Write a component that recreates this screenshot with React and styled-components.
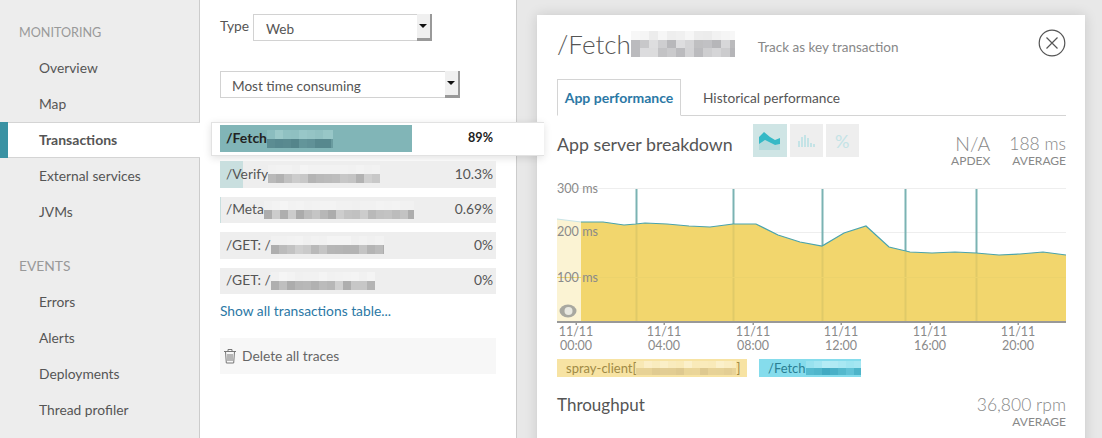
import React from 'react';
import styled, { createGlobalStyle } from 'styled-components';

const Global = createGlobalStyle`
  html, body { margin: 0; padding: 0; background: #e8e8e8; }
  body { font-family: Lato, "Liberation Sans", sans-serif; color: #555; }
`;

const Page = styled.div`
  display: flex;
  width: 1102px;
  height: 438px;
  overflow: hidden;
`;

const Sidebar = styled.nav`
  width: 199px;
  flex: none;
  background: #ededed;
  border-right: 1px solid #ccc;
  padding-top: 14px;
`;

const SectionLabel = styled.div`
  height: 36px;
  line-height: ${p => p.$line}px;
  padding-left: 19px;
  font-size: ${p => p.$size}px;
  color: #999;
  margin-top: ${p => p.$gap || 0}px;
`;

const NavItem = styled.div`
  position: relative;
  height: 36px;
  line-height: 36px;
  padding-left: 39px;
  font-size: 13.8px;
  color: #555;
  ${p => p.$active && `
    background: #fff;
    font-size: 14px;
    font-weight: 700;
    margin-right: -1px;
    box-shadow: inset 8px 0 0 #3a92a3, inset 0 1px 0 #d4d4d4, inset 0 -1px 0 #d4d4d4;
  `}
`;

const Middle = styled.section`
  width: 276px;
  flex: none;
  background: #fff;
  border-right: 1px solid #ccc;
  padding: 14px 20px 0 20px;
  position: relative;
  z-index: 2;
`;

const TypeRow = styled.div`
  display: flex;
  align-items: flex-start;
  justify-content: space-between;
  width: 212px;
  font-size: 13.8px;
  line-height: 24px;
`;

const SelectBox = styled.div`
  position: relative;
  box-sizing: border-box;
  width: ${p => p.$w}px;
  height: 27px;
  line-height: 28px;
  padding-left: ${p => p.$pad}px;
  border: 1px solid #d2d2d2;
  font-size: 13.6px;
  color: #555;
  background: #fff;
  margin-top: ${p => p.$top || 0}px;
`;

const SelectArrow = styled.span`
  position: absolute;
  right: -1px;
  top: -1px;
  width: 15px;
  height: 27px;
  box-sizing: border-box;
  background: #f0f0f0;
  border-right: 2px solid #999;
  border-bottom: 3px solid #999;
  &::after {
    content: '';
    position: absolute;
    left: 2px;
    top: 10px;
    border: 4px solid transparent;
    border-top: 4px solid #111;
  }
`;

const Rows = styled.div`
  margin-top: 24px;
  display: flex;
  flex-direction: column;
`;

const Row = styled.div`
  position: relative;
  display: flex;
  align-items: center;
  height: 26.5px;
  margin-bottom: 9px;
  background: #eee;
  font-size: 13.8px;
  color: #555;
`;

const ActiveRow = styled.div`
  position: relative;
  height: 34px;
  margin: 0 -48px 5px -9px;
  padding: 2px 0 0 8px;
  box-sizing: border-box;
  background: #fff;
  border: 1px solid #e2e2e2;
  border-right: 0;
  box-shadow: 0 2px 8px rgba(0,0,0,.12);
  display: flex;
`;

const ActiveInner = styled.div`
  position: relative;
  display: flex;
  align-items: center;
  width: 276px;
  height: 27px;
  font-size: 14px;
  font-weight: 700;
  color: #222;
`;

const Fill = styled.span`
  position: absolute;
  left: 0;
  top: 0;
  bottom: 0;
  background: ${p => p.$color};
`;

const RowName = styled.span`
  position: relative;
  padding-left: 6px;
  display: flex;
  align-items: center;
  white-space: nowrap;
  flex: 1;
`;

const RowText = styled.span`
  padding-bottom: 2px;
`;

const Percent = styled.span`
  position: relative;
  padding: 0 3px 2px 0;
  font-size: ${p => p.$size || 13.8}px;
`;

const MosaicSvg = styled.svg`
  display: block;
  flex: none;
  shape-rendering: crispEdges;
`;

const ShowAll = styled.a`
  display: block;
  margin-top: -2px;
  font-size: 13.8px;
  line-height: 20px;
  color: #2b78a5;
`;

const DeleteBar = styled.div`
  margin-top: 17px;
  height: 36px;
  display: flex;
  align-items: center;
  gap: 5px;
  padding: 0 0 1px 3px;
  box-sizing: border-box;
  background: #f7f7f7;
  font-size: 13.8px;
  color: #666;
`;

const Stage = styled.main`
  flex: 1;
  padding: 15px 17px 0 20px;
  background: #e8e8e8;
  min-width: 0;
`;

const Card = styled.article`
  height: 440px;
  background: #fff;
  box-sizing: border-box;
  padding: 12px 19px 0 20px;
  box-shadow: 0 0 12px rgba(0,0,0,.14);
`;

const TitleRow = styled.div`
  display: flex;
  align-items: center;
  height: 34px;
`;

const CloseSlot = styled.div`
  display: flex;
  margin-top: -3px;
`;

const Title = styled.h1`
  margin: 0;
  font-size: 26px;
  font-weight: 300;
  color: #555;
  display: flex;
  align-items: center;
`;

const TrackLink = styled.span`
  margin-left: 23px;
  margin-top: 6px;
  font-size: 13.5px;
  color: #888;
  flex: 1;
`;

const Tabs = styled.div`
  display: flex;
  height: 37px;
  margin-top: 18px;
  box-shadow: inset 0 -1px 0 #d4d4d4;
`;

const Tab = styled.div`
  box-sizing: border-box;
  height: 37px;
  line-height: 37px;
  ${p => p.$active ? `
    width: 124px;
    line-height: 35px;
    text-align: center;
    border: 1px solid #d4d4d4;
    border-bottom: 1px solid #fff;
    color: #2b78a5;
    font-weight: 700;
    font-size: 14px;
  ` : `
    margin-left: 22px;
    color: #555;
    font-size: 13.7px;
  `}
`;

const HeaderRow = styled.div`
  display: flex;
  align-items: flex-start;
  margin-top: 8px;
  height: 64px;
`;

const Heading = styled.h2`
  margin: 8px 20px 0 0;
  font-size: 17.8px;
  line-height: 24px;
  font-weight: 400;
  color: #555;
  white-space: nowrap;
`;

const ChartButtons = styled.div`
  display: flex;
  gap: 3px;
`;

const ChartButton = styled.div`
  width: ${p => p.$w || 33}px;
  height: 33px;
  background: ${p => (p.$on ? '#cfe5e5' : '#eee')};
  display: flex;
  align-items: center;
  justify-content: center;
  color: #c4e3e6;
  font-size: 18px;
  font-weight: 400;
`;

const Stats = styled.div`
  margin-left: auto;
  display: flex;
  gap: 19px;
`;

const Stat = styled.div`
  text-align: right;
  color: #888;
`;

const StatValue = styled.div`
  font-size: ${p => p.$size || 17.5}px;
  line-height: 24px;
  font-weight: 300;
  margin-top: ${p => p.$top ?? 8}px;
`;

const StatLabel = styled.div`
  font-size: 12px;
  line-height: 14px;
  margin-top: -2px;
`;

const ChartSvg = styled.svg`
  display: block;
  width: 509px;
  height: 180px;
  margin-top: -12px;
  font-family: Lato, "Liberation Sans", sans-serif;
`;

const Legend = styled.div`
  display: flex;
  gap: 12px;
  margin-top: 3px;
`;

const LegendChip = styled.div`
  height: 18px;
  box-sizing: border-box;
  width: ${p => p.$w}px;
  display: flex;
  align-items: center;
  padding-left: 9px;
  font-size: 13px;
  background: ${p => p.$bg};
  color: ${p => p.$fg};
  white-space: nowrap;
`;

const FooterRow = styled.div`
  display: flex;
  justify-content: space-between;
  align-items: flex-start;
  margin-top: 16px;
`;

const FooterTitle = styled.div`
  font-size: 17px;
  line-height: 24px;
  color: #555;
`;

function rng(seed) {
  let s = seed;
  return () => {
    s = (s * 16807) % 2147483647;
    return s / 2147483647;
  };
}

function Mosaic({ w, h, seed, color = '#aaa', topColor = '#f4f4f4', cell = 8, rows = 2 }) {
  const r = rng(seed);
  const cols = Math.ceil(w / cell);
  const rects = [];
  for (let y = 0; y < rows; y++) {
    for (let x = 0; x < cols; x++) {
      const v = r();
      const top = y === 0;
      rects.push(
        <rect key={`${x}-${y}`} x={x * cell} y={(y * h) / rows} width={cell} height={h / rows}
          fill={top ? topColor : color} fillOpacity={top ? 0.4 + v * 0.6 : 0.45 + v * 0.55} />
      );
    }
  }
  return <MosaicSvg width={w} height={h} viewBox={`0 0 ${w} ${h}`}>{rects}</MosaicSvg>;
}

const areaPts = [[557,219],[581,222],[603,222],[624,225],[636,224],[645,223],[667,224],[689,226],[710,227],[733,224],[756,224],[778,235],[800,242],[822,246],[844,233],[866,226],[889,247],[910,252],[932,253],[955,252],[976,253],[999,255],[1020,254],[1043,252],[1066,255]];

function Chart() {
  const ox = 557, oy = 176;
  const pts = areaPts.map(([x, y]) => `${x - ox},${y - oy}`).join(' ');
  const base = 321 - oy;
  const marks = [[636, 224], [733, 224], [822, 246], [905, 251], [976, 253]];
  const ticks = [[576, '00:00'], [664, '04:00'], [753, '08:00'], [841, '12:00'], [930, '16:00'], [1018, '20:00']];
  return (
    <ChartSvg viewBox="0 0 509 180">
      {[188, 232, 277].map(y => <line key={y} x1="0" x2="509" y1={y - oy + .5} y2={y - oy + .5} stroke="#eee" />)}
      {marks.map(([x]) => <line key={x} x1={x - ox + .5} x2={x - ox + .5} y1={189 - oy} y2={base} stroke="#7ab3b3" strokeWidth="2" />)}
      <polygon points={`0,${base} ${pts} 509,${base}`} fill="#f2d66d" />
      <polyline points={pts} fill="none" stroke="#4aa3ad" strokeWidth="1.2" />
      <rect x="0" y={218 - oy} width="24" height={base - (218 - oy)} fill="#fff" fillOpacity=".7" />
      {marks.map(([x, y]) => <line key={`m${x}`} x1={x - ox + .5} x2={x - ox + .5} y1={y - oy + 1} y2={base} stroke="#e0ca68" strokeWidth="2" />)}
      <line x1="0" x2="509" y1={277 - oy + .5} y2={277 - oy + .5} stroke="#ecd36c" />
      {[['300 ms', 192], ['200 ms', 235], ['100 ms', 281]].map(([t, y]) => (
        <text key={t} x="0" y={y - oy + 1} fontSize="12.6" fill="#8a8a8a">{t}</text>
      ))}
      <ellipse cx="11" cy={311 - oy} rx="8.5" ry="6.5" fill="#a8a8a0" />
      <circle cx="11.5" cy={311 - oy} r="4" fill="#e8e8e0" />
      <rect x="0" y={321 - oy} width="509" height="2" fill="#999" />
      {ticks.map(([x, t]) => (
        <g key={t} fill="#8a8a8a" fontSize="12.5" textAnchor="middle">
          <rect x={x - ox - .5} y={323 - oy} width="1.5" height="2" fill="#999" />
          <text x={x - ox} y={336 - oy}>11/11</text>
          <text x={x - ox} y={350 - oy}>{t}</text>
        </g>
      ))}
    </ChartSvg>
  );
}

const TrashIcon = () => (
  <svg width="14" height="16" viewBox="0 0 14 16" fill="none" stroke="#777" strokeWidth="1">
    <path d="M1 3.5h12M5 3.5V1.5h4v2M2.5 3.5l.8 11.5h7.4l.8-11.5M5 6v7M7 6v7M9 6v7" />
  </svg>
);

const CloseIcon = () => (
  <svg width="28" height="28" viewBox="0 0 28 28" fill="none" stroke="#555" strokeWidth="1.2">
    <circle cx="14" cy="14" r="12.8" />
    <path d="M8.5 8.5l11 11M19.5 8.5l-11 11" />
  </svg>
);

const AreaIcon = () => (
  <svg width="21" height="18" viewBox="0 0 21 18">
    <path d="M0 12l6-4 4 2 6 3 5-1v6H0z" fill="#b4dadc" />
    <path d="M0 5l5-5 6 5 5 3 5-2v6l-5 1-6-3-4-2-6 4z" fill="#35b9c6" />
  </svg>
);

const BarsIcon = () => (
  <svg width="17" height="12" viewBox="0 0 17 12" fill="#c4e3e6">
    <rect x="0" y="6" width="2" height="6" />
    <rect x="3" y="2" width="2" height="10" />
    <rect x="6" y="0" width="2" height="12" />
    <rect x="9" y="3" width="2" height="9" />
    <rect x="12" y="8" width="2" height="4" />
    <rect x="15" y="9" width="2" height="3" />
  </svg>
);

const sections = {
  monitoring: ['Overview', 'Map', 'Transactions', 'External services', 'JVMs'],
  events: ['Errors', 'Alerts', 'Deployments', 'Thread profiler'],
};

const rows = [
  { name: '/Verify', pct: '10.3%', fill: 23, mw: 112, seed: 11 },
  { name: '/Meta', pct: '0.69%', fill: 1, mw: 150, seed: 29 },
  { name: '/GET: /', pct: '0%', fill: 0, mw: 113, seed: 47 },
  { name: '/GET: /', pct: '0%', fill: 0, mw: 104, seed: 83 },
];

export default function App() {
  return (
    <Page>
      <Global />
      <Sidebar>
        <SectionLabel $size={12.6} $line={38}>MONITORING</SectionLabel>
        {sections.monitoring.map(n => <NavItem key={n} $active={n === 'Transactions'}>{n}</NavItem>)}
        <SectionLabel $size={13.8} $line={36} $gap={18}>EVENTS</SectionLabel>
        {sections.events.map(n => <NavItem key={n}>{n}</NavItem>)}
      </Sidebar>
      <Middle>
        <TypeRow>
          Type
          <SelectBox $w={179} $pad={12}>Web<SelectArrow /></SelectBox>
        </TypeRow>
        <SelectBox $w={240} $pad={11} $top={30}>Most time consuming<SelectArrow /></SelectBox>
        <Rows>
          <ActiveRow>
            <ActiveInner>
              <Fill $color="#81b5b7" style={{ width: 192 }} />
              <RowName><RowText>/Fetch</RowText><Mosaic w={66} h={18} seed={7} color="#4f7f86" topColor="#9ccaca" /></RowName>
              <Percent $size={12.6}>89%</Percent>
            </ActiveInner>
          </ActiveRow>
          {rows.map(r => (
            <Row key={r.name + r.seed}>
              <Fill $color="#c9dfdf" style={{ width: r.fill }} />
              <RowName><RowText>{r.name}</RowText><Mosaic w={r.mw} h={18} seed={r.seed} /></RowName>
              <Percent>{r.pct}</Percent>
            </Row>
          ))}
        </Rows>
        <ShowAll>Show all transactions table...</ShowAll>
        <DeleteBar><TrashIcon />Delete all traces</DeleteBar>
      </Middle>
      <Stage>
        <Card>
          <TitleRow>
            <Title>/Fetch<Mosaic w={104} h={26} seed={131} color="#b5b5b8" topColor="#ececec" cell={9} rows={3} /></Title>
            <TrackLink>Track as key transaction</TrackLink>
            <CloseSlot><CloseIcon /></CloseSlot>
          </TitleRow>
          <Tabs>
            <Tab $active>App performance</Tab>
            <Tab>Historical performance</Tab>
          </Tabs>
          <HeaderRow>
            <Heading>App server breakdown</Heading>
            <ChartButtons>
              <ChartButton $w={34} $on><AreaIcon /></ChartButton>
              <ChartButton><BarsIcon /></ChartButton>
              <ChartButton>%</ChartButton>
            </ChartButtons>
            <Stats>
              <Stat><StatValue $size={19.5}>N/A</StatValue><StatLabel>APDEX</StatLabel></Stat>
              <Stat><StatValue>188 ms</StatValue><StatLabel>AVERAGE</StatLabel></Stat>
            </Stats>
          </HeaderRow>
          <Chart />
          <Legend>
            <LegendChip $w={190} $bg="#f7e3a3" $fg="#a08a45">spray-client[<Mosaic w={100} h={14} seed={211} color="#dcc78f" topColor="#fbf0cc" />]</LegendChip>
            <LegendChip $w={102} $bg="#85dcec" $fg="#2a7f93">/Fetch<Mosaic w={55} h={14} seed={307} color="#3fa9c0" topColor="#b5ecf5" /></LegendChip>
          </Legend>
          <FooterRow>
            <FooterTitle>Throughput</FooterTitle>
            <Stat><StatValue $top={0}>36,800 rpm</StatValue><StatLabel>AVERAGE</StatLabel></Stat>
          </FooterRow>
        </Card>
      </Stage>
    </Page>
  );
}
